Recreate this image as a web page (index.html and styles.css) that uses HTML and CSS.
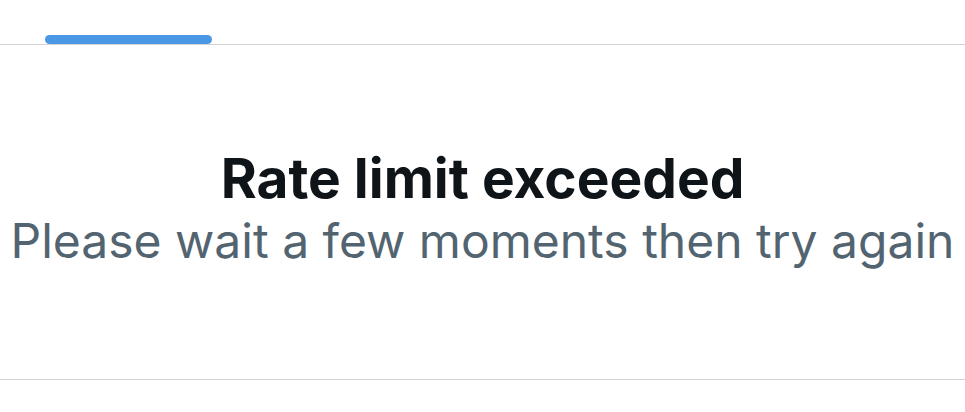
FILE: index.html
```html
<!DOCTYPE html>
<html>
<head>
<meta charset="utf-8">
<link rel="stylesheet" href="styles.css">
</head>
<body>
<div class="tabs">
  <div class="tab"><div class="indicator"></div></div>
</div>
<main class="content">
  <h1 class="title">Rate limit exceeded</h1>
  <p class="subtitle">Please wait a few moments then try again</p>
</main>
<div class="footer"></div>
</body>
</html>
```
FILE: styles.css
```css
html, body {
  margin: 0;
  padding: 0;
  background: #ffffff;
}
body {
  width: 965px;
  height: 412px;
  overflow: hidden;
  font-family: Inter, "Noto Sans", sans-serif;
}
.tabs {
  height: 44px;
  border-bottom: 1px solid #d3d3d3;
  display: flex;
  align-items: flex-end;
  padding-left: 45px;
}
.tab {
  width: 167px;
}
.indicator {
  height: 9px;
  background: #4a97e6;
  border-radius: 5px;
}
.content {
  height: 334px;
  border-bottom: 1px solid #d3d3d3;
  display: flex;
  flex-direction: column;
  align-items: center;
  justify-content: flex-start;
}
.title {
  margin: 103px 0 0 0;
  font-size: 55px;
  line-height: 60px;
  font-weight: 700;
  color: #0f1419;
  letter-spacing: 0;
}
.subtitle {
  margin: 5px 0 0 0;
  font-size: 48px;
  line-height: 56px;
  font-weight: 400;
  color: #536471;
  white-space: nowrap;
}
```
